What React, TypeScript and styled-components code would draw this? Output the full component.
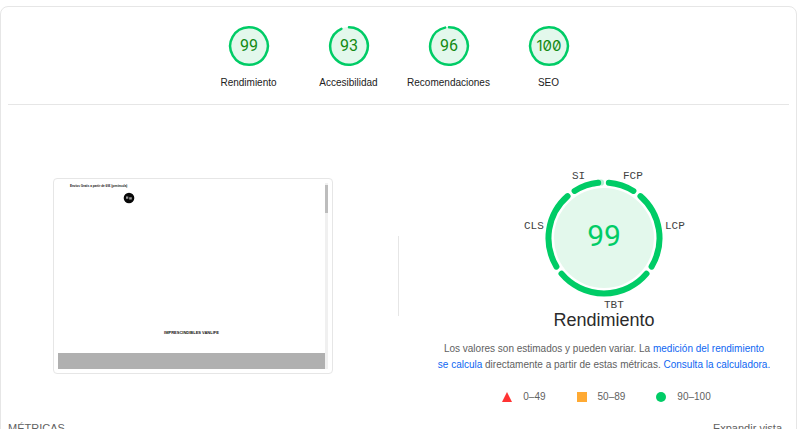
import React from "react";
import styled, { createGlobalStyle } from "styled-components";

const GREEN = "#00cc66";
const PALE = "#e3f8ec";
const LINE = "#e6e6e6";
const SANS = '"Liberation Sans", Arial, sans-serif';
const MONO = '"Liberation Mono", "Courier New", monospace';

const GlobalStyle = createGlobalStyle`
  * { box-sizing: border-box; }
  html, body { margin: 0; background: #fff; }
  body { height: 100vh; overflow: hidden; font: 10px/16px ${SANS}; color: #616161; }
  h1, h2, p, ul { margin: 0; padding: 0; font-weight: 400; }
`;

const Page = styled.main`
  padding: 6px 9px 0 0;
`;

const Card = styled.article`
  padding: 0 7px 24px;
  border: 1px solid ${LINE};
  border-radius: 8px;
`;

const ScoreNav = styled.nav`
  display: flex;
  justify-content: center;
  padding: 18px 0 13px;
  border-bottom: 1px solid ${LINE};
`;

const ScoreLink = styled.a`
  display: flex;
  flex: 0 0 100px;
  flex-direction: column;
  align-items: center;
  gap: 8px;
  color: #212121;
  text-decoration: none;
`;

const ScoreSvg = styled.svg`
  display: block;
  width: 42px;
  height: 42px;
`;

const ScoreValue = styled.text<{ $large?: boolean; $slashed?: boolean }>`
  font-family: ${(p) => (p.$slashed ? "Inter" : "Roboto")}, sans-serif;
  font-size: ${(p) => (p.$large ? 30 : p.$slashed ? 15 : 16)}px;
  font-feature-settings: "zero";
  text-anchor: middle;
  fill: ${(p) => (p.$large ? GREEN : "#138a13")};
`;

const Overview = styled.section`
  display: grid;
  grid-template-columns: 1fr 1px 1fr;
  column-gap: 20px;
  align-items: center;
  padding-top: 44px;
`;

const Divider = styled.div`
  height: 80px;
  background: ${LINE};
`;

const Preview = styled.figure`
  display: flex;
  width: 280px;
  height: 196px;
  margin: 0;
  padding: 4px;
  justify-self: center;
  border: 1px solid ${LINE};
  border-radius: 4px;
`;

const PreviewPage = styled.div`
  display: flex;
  flex: 1;
  flex-direction: column;
  color: #111;
`;

const PreviewNotice = styled.div`
  padding: 1px 12px 0;
  font-size: 3px;
  line-height: 4px;
  font-weight: 700;
`;

const PreviewLogo = styled.svg`
  width: 12px;
  height: 12px;
  margin: 4px 0 0 65px;
`;

const PreviewTitle = styled.div`
  margin-top: auto;
  padding-bottom: 17px;
  font: 700 4px/6px ${SANS};
  text-align: center;
`;

const PreviewBanner = styled.div`
  height: 16px;
  background: #b0b0b0;
`;

const PreviewScroll = styled.div`
  width: 3px;
  padding-top: 2px;
  background: #f0f0f0;
`;

const PreviewThumb = styled.div`
  height: 28px;
  background: #bdbdbd;
`;

const Summary = styled.div`
  display: flex;
  flex-direction: column;
  align-items: center;
  text-align: center;
`;

const Gauge = styled.svg`
  display: block;
  width: 180px;
  height: 161px;
  overflow: visible;
`;

const MetricLabel = styled.text`
  font: 11px ${MONO};
  fill: #424242;
`;

const Title = styled.h1`
  font-size: 18px;
  line-height: 20px;
  color: #2b2b2b;
`;

const Description = styled.p`
  max-width: 340px;
  margin-top: 11px;
`;

const TextLink = styled.a`
  color: #0d66f2;
  text-decoration: none;
`;

const Legend = styled.ul`
  display: flex;
  gap: 31px;
  margin-top: 18px;
  padding-left: 5px;
  list-style: none;
  line-height: 12px;
`;

const LegendItem = styled.li`
  display: flex;
  align-items: center;
  gap: 11px;
`;

const LegendIcon = styled.svg`
  width: 10px;
  height: 10px;
`;

const MetricsHeader = styled.header`
  display: flex;
  justify-content: space-between;
  padding-right: 7px;
  margin-top: 17px;
`;

const MetricsTitle = styled.h2`
  font-size: 11px;
  line-height: 16px;
`;

const ExpandButton = styled.button`
  padding: 0;
  border: 0;
  background: none;
  color: #616161;
  font: 11px/16px ${SANS};
  cursor: pointer;
`;

const point = (cx: number, cy: number, r: number, deg: number) => {
  const a = (deg * Math.PI) / 180;
  return `${cx + r * Math.sin(a)} ${cy - r * Math.cos(a)}`;
};

const arc = (cx: number, cy: number, r: number, from: number, to: number) =>
  `M${point(cx, cy, r, from)}A${r} ${r} 0 ${to - from > 180 ? 1 : 0} 1 ${point(cx, cy, r, to)}`;

const scores = [
  { id: "rendimiento", label: "Rendimiento", value: 99, end: 359 },
  { id: "accesibilidad", label: "Accesibilidad", value: 93, end: 336 },
  { id: "recomendaciones", label: "Recomendaciones", value: 96, end: 348 },
  { id: "seo", label: "SEO", value: 100, end: 359 },
];

const segments = [
  [5, 32],
  [41, 121],
  [130, 230],
  [239, 319],
  [328, 354],
];

const metrics = [
  { label: "SI", x: 58, y: 30 },
  { label: "FCP", x: 109, y: 30 },
  { label: "LCP", x: 151, y: 80 },
  { label: "TBT", x: 90, y: 159 },
  { label: "CLS", x: 10, y: 80 },
];

export default function App() {
  return (
    <>
      <GlobalStyle />
      <Page>
        <Card>
          <ScoreNav>
            {scores.map((s) => (
              <ScoreLink key={s.id} href={`#${s.id}`}>
                <ScoreSvg viewBox="0 0 42 42">
                  <circle cx="21" cy="21" r="19" fill={PALE} />
                  <path d={arc(21, 21, 18.8, 0, s.end)} fill="none" stroke={GREEN} strokeWidth="2.5" strokeLinecap="round" />
                  <ScoreValue $slashed={s.value === 100} x="21" y="26">{s.value}</ScoreValue>
                </ScoreSvg>
                {s.label}
              </ScoreLink>
            ))}
          </ScoreNav>

          <Overview id="rendimiento">
            <Preview>
              <PreviewPage>
                <PreviewNotice>Envíos Gratis a partir de 60€ (península)</PreviewNotice>
                <PreviewLogo viewBox="0 0 12 12">
                  <circle cx="6" cy="6" r="5.3" fill="#080808" />
                  <path d="M3 4.5h2.3v2.2H3zM6.2 5.3h2.6v2.2H6.2z" fill="#999" />
                </PreviewLogo>
                <PreviewTitle>IMPRESCINDIBLES VANLIFE</PreviewTitle>
                <PreviewBanner />
              </PreviewPage>
              <PreviewScroll>
                <PreviewThumb />
              </PreviewScroll>
            </Preview>
            <Divider />
            <Summary>
              <Gauge viewBox="0 0 180 161">
                <circle cx="90" cy="89" r="50" fill={PALE} />
                <path d={arc(90, 89, 55.5, 350, 357)} fill="none" stroke="#b3f0d1" strokeWidth="6" strokeLinecap="round" />
                {segments.map(([from, to]) => (
                  <path key={from} d={arc(90, 89, 55.5, from, to)} fill="none" stroke={GREEN} strokeWidth="6" strokeLinecap="round" />
                ))}
                <ScoreValue $large x="90" y="97">99</ScoreValue>
                {metrics.map((m) => (
                  <MetricLabel key={m.label} x={m.x} y={m.y}>{m.label}</MetricLabel>
                ))}
              </Gauge>
              <Title>Rendimiento</Title>
              <Description>
                Los valores son estimados y pueden variar. La{" "}
                <TextLink href="#medicion">medición del rendimiento se{"\u00a0"}calcula</TextLink> directamente a
                partir de estas métricas. <TextLink href="#calculadora">Consulta la calculadora.</TextLink>
              </Description>
              <Legend>
                <LegendItem>
                  <LegendIcon viewBox="0 0 10 10"><path d="M5 0l5 10H0z" fill="#ff3333" /></LegendIcon>
                  0–49
                </LegendItem>
                <LegendItem>
                  <LegendIcon viewBox="0 0 10 10"><path d="M0 0h10v10H0z" fill="#ffaa33" /></LegendIcon>
                  50–89
                </LegendItem>
                <LegendItem>
                  <LegendIcon viewBox="0 0 10 10"><circle cx="5" cy="5" r="5" fill={GREEN} /></LegendIcon>
                  90–100
                </LegendItem>
              </Legend>
            </Summary>
          </Overview>

          <MetricsHeader>
            <MetricsTitle>MÉTRICAS</MetricsTitle>
            <ExpandButton type="button">Expandir vista</ExpandButton>
          </MetricsHeader>
        </Card>
      </Page>
    </>
  );
}
